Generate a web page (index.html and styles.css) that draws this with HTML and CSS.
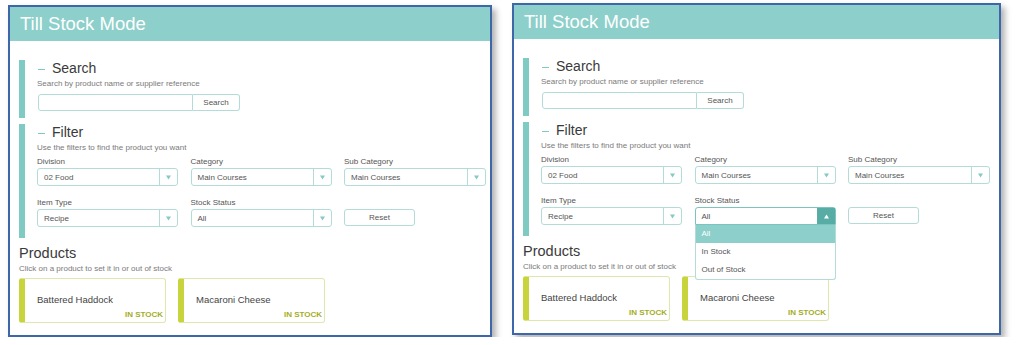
FILE: index.html
```html
<!DOCTYPE html>
<html lang="en">
<head>
    <meta charset="UTF-8">
    <meta name="viewport" content="width=device-width, initial-scale=1.0">
    <title>Till Stock Mode</title>
    <link rel="stylesheet" href="styles.css">
</head>
<body>
    <div class="screens">
        <!-- Closed state -->
        <section class="window">
            <header class="window-header">Till Stock Mode</header>
            <div class="window-body">
                <div class="panel">
                    <h2 class="panel-title"><span class="dash"></span>Search</h2>
                    <p class="hint">Search by product name or supplier reference</p>
                    <div class="search-row">
                        <input class="search-input" type="text">
                        <button class="search-btn" type="button">Search</button>
                    </div>
                </div>
                <div class="panel panel-filter">
                    <h2 class="panel-title"><span class="dash"></span>Filter</h2>
                    <p class="hint">Use the filters to find the product you want</p>
                    <div class="filter-grid">
                        <div class="field">
                            <label>Division</label>
                            <div class="select"><span>02 Food</span><span class="caret"><svg viewBox="0 0 6 5"><path d="M0 0h6L3 5z"/></svg></span></div>
                        </div>
                        <div class="field">
                            <label>Category</label>
                            <div class="select"><span>Main Courses</span><span class="caret"><svg viewBox="0 0 6 5"><path d="M0 0h6L3 5z"/></svg></span></div>
                        </div>
                        <div class="field">
                            <label>Sub Category</label>
                            <div class="select"><span>Main Courses</span><span class="caret"><svg viewBox="0 0 6 5"><path d="M0 0h6L3 5z"/></svg></span></div>
                        </div>
                        <div class="field">
                            <label>Item Type</label>
                            <div class="select"><span>Recipe</span><span class="caret"><svg viewBox="0 0 6 5"><path d="M0 0h6L3 5z"/></svg></span></div>
                        </div>
                        <div class="field">
                            <label>Stock Status</label>
                            <div class="select"><span>All</span><span class="caret"><svg viewBox="0 0 6 5"><path d="M0 0h6L3 5z"/></svg></span></div>
                        </div>
                        <div class="field field-action">
                            <button class="reset-btn" type="button">Reset</button>
                        </div>
                    </div>
                </div>
                <h2 class="products-title">Products</h2>
                <p class="hint">Click on a product to set it in or out of stock</p>
                <div class="products">
                    <div class="product-card">
                        <span class="product-name">Battered Haddock</span>
                        <span class="product-stock">IN STOCK</span>
                    </div>
                    <div class="product-card">
                        <span class="product-name">Macaroni Cheese</span>
                        <span class="product-stock">IN STOCK</span>
                    </div>
                </div>
            </div>
        </section>

        <!-- Stock status dropdown open -->
        <section class="window window-open">
            <header class="window-header">Till Stock Mode</header>
            <div class="window-body">
                <div class="panel">
                    <h2 class="panel-title"><span class="dash"></span>Search</h2>
                    <p class="hint">Search by product name or supplier reference</p>
                    <div class="search-row">
                        <input class="search-input" type="text">
                        <button class="search-btn" type="button">Search</button>
                    </div>
                </div>
                <div class="panel panel-filter">
                    <h2 class="panel-title"><span class="dash"></span>Filter</h2>
                    <p class="hint">Use the filters to find the product you want</p>
                    <div class="filter-grid">
                        <div class="field">
                            <label>Division</label>
                            <div class="select"><span>02 Food</span><span class="caret"><svg viewBox="0 0 6 5"><path d="M0 0h6L3 5z"/></svg></span></div>
                        </div>
                        <div class="field">
                            <label>Category</label>
                            <div class="select"><span>Main Courses</span><span class="caret"><svg viewBox="0 0 6 5"><path d="M0 0h6L3 5z"/></svg></span></div>
                        </div>
                        <div class="field">
                            <label>Sub Category</label>
                            <div class="select"><span>Main Courses</span><span class="caret"><svg viewBox="0 0 6 5"><path d="M0 0h6L3 5z"/></svg></span></div>
                        </div>
                        <div class="field">
                            <label>Item Type</label>
                            <div class="select"><span>Recipe</span><span class="caret"><svg viewBox="0 0 6 5"><path d="M0 0h6L3 5z"/></svg></span></div>
                        </div>
                        <div class="field field-open">
                            <label>Stock Status</label>
                            <div class="select select-open"><span>All</span><span class="caret"><svg viewBox="0 0 6 5"><path d="M0 5h6L3 0z"/></svg></span></div>
                            <ul class="dropdown">
                                <li class="active">All</li>
                                <li>In Stock</li>
                                <li>Out of Stock</li>
                            </ul>
                        </div>
                        <div class="field field-action">
                            <button class="reset-btn" type="button">Reset</button>
                        </div>
                    </div>
                </div>
                <h2 class="products-title">Products</h2>
                <p class="hint">Click on a product to set it in or out of stock</p>
                <div class="products">
                    <div class="product-card">
                        <span class="product-name">Battered Haddock</span>
                        <span class="product-stock">IN STOCK</span>
                    </div>
                    <div class="product-card">
                        <span class="product-name">Macaroni Cheese</span>
                        <span class="product-stock">IN STOCK</span>
                    </div>
                </div>
            </div>
        </section>
    </div>
</body>
</html>
```

FILE: styles.css
```css
body {
    margin: 0;
    padding: 0;
    background-color: #fff;
    font-family: "Liberation Sans", Arial, sans-serif;
    color: #555;
}
.screens {
    display: flex;
    align-items: flex-start;
    gap: 20px;
    padding-left: 8px;
}
.window {
    width: 484px;
    box-sizing: border-box;
    margin-top: 5px;
    border: 2px solid #3d67a8;
    background: #fff;
    box-shadow: 4px 4px 6px rgba(0, 0, 0, 0.3);
}
.window-open {
    width: 489px;
    margin-top: 3px;
}
.window-header {
    height: 34px;
    line-height: 34px;
    padding-left: 10px;
    background-color: #8dcfca;
    color: #fff;
    font-size: 18.5px;
}
.window-body {
    padding: 19px 9px 12px 9px;
}
.panel {
    border-left: 6px solid #80cac4;
    padding: 0 0 7px 12px;
}
.panel-filter {
    margin-top: 6px;
    padding-bottom: 11px;
}
.panel-title {
    margin: 0;
    font-size: 14px;
    line-height: 16px;
    font-weight: normal;
    color: #3a3a3a;
}
.dash {
    display: inline-block;
    width: 7px;
    height: 1px;
    margin: 0 7px 0 1px;
    background-color: #80cac4;
    vertical-align: middle;
}
.hint {
    margin: 3px 0 0;
    font-size: 8px;
    line-height: 10px;
    color: #7a7a7a;
}
.search-row {
    display: flex;
    margin-top: 5px;
    margin-left: 1px;
}
.search-input {
    width: 155px;
    height: 17px;
    box-sizing: border-box;
    margin: 0;
    border: 1px solid #b3dcd8;
    border-radius: 3px 0 0 3px;
    padding: 0 4px;
}
.search-btn {
    width: 47px;
    height: 17px;
    margin: 0;
    padding: 0;
    border: 1px solid #b3dcd8;
    border-left: none;
    border-radius: 0 3px 3px 0;
    background: #fff;
    font-family: inherit;
    font-size: 8px;
    color: #555;
}
.filter-grid {
    display: grid;
    grid-template-columns: 141px 141px 142px;
    column-gap: 12.5px;
    row-gap: 12px;
    margin-top: 4px;
}
.field {
    position: relative;
}
.field label {
    display: block;
    font-size: 8px;
    line-height: 10px;
    margin-bottom: 1px;
    color: #555;
}
.field-action {
    align-self: end;
}
.select {
    display: flex;
    align-items: center;
    height: 18px;
    box-sizing: border-box;
    border: 1px solid #b3dcd8;
    border-radius: 3px;
    font-size: 8px;
    color: #555;
}
.select span:first-child {
    flex: 1;
    padding-left: 6px;
}
.caret {
    display: flex;
    align-items: center;
    justify-content: center;
    width: 17px;
    height: 100%;
    border-left: 1px solid #b3dcd8;
    color: #85c9c3;
}
.caret svg {
    width: 5px;
    height: 5px;
    fill: currentColor;
}
.select-open {
    border-color: #7cc4be;
    border-radius: 3px 3px 0 0;
}
.select-open .caret {
    background-color: #57aca6;
    border-left-color: #57aca6;
    color: #fff;
}
.dropdown {
    position: absolute;
    left: 0;
    right: 0;
    top: 100%;
    z-index: 2;
    margin: 0;
    padding: 0;
    list-style: none;
    background: #fff;
    border: 1px solid #b3dcd8;
    border-top: none;
    border-radius: 0 0 3px 3px;
    font-size: 8px;
}
.dropdown li {
    height: 18px;
    line-height: 18px;
    padding-left: 6px;
    color: #555;
}
.dropdown li.active {
    background-color: #8dcfca;
    color: #fff;
}
.reset-btn {
    width: 71px;
    height: 17px;
    margin: 0 0 1px;
    padding: 0;
    border: 1px solid #b3dcd8;
    border-radius: 3px;
    background: #fff;
    font-family: inherit;
    font-size: 8px;
    color: #555;
}
.products-title {
    margin: 7px 0 0;
    font-size: 14.5px;
    line-height: 16px;
    font-weight: normal;
    color: #3a3a3a;
}
.products {
    display: flex;
    gap: 12px;
    margin-top: 4px;
}
.product-card {
    display: flex;
    flex-direction: column;
    width: 147px;
    height: 45px;
    box-sizing: border-box;
    padding: 15px 2px 2px 12px;
    border: 1px solid #dfe7ae;
    border-left: 6px solid #c8d43c;
    border-radius: 3px;
}
.product-name {
    font-size: 9.5px;
    line-height: 12px;
    color: #444;
}
.product-stock {
    margin-top: auto;
    align-self: flex-end;
    font-size: 8px;
    line-height: 10px;
    font-weight: bold;
    color: #a3ad27;
}
```
